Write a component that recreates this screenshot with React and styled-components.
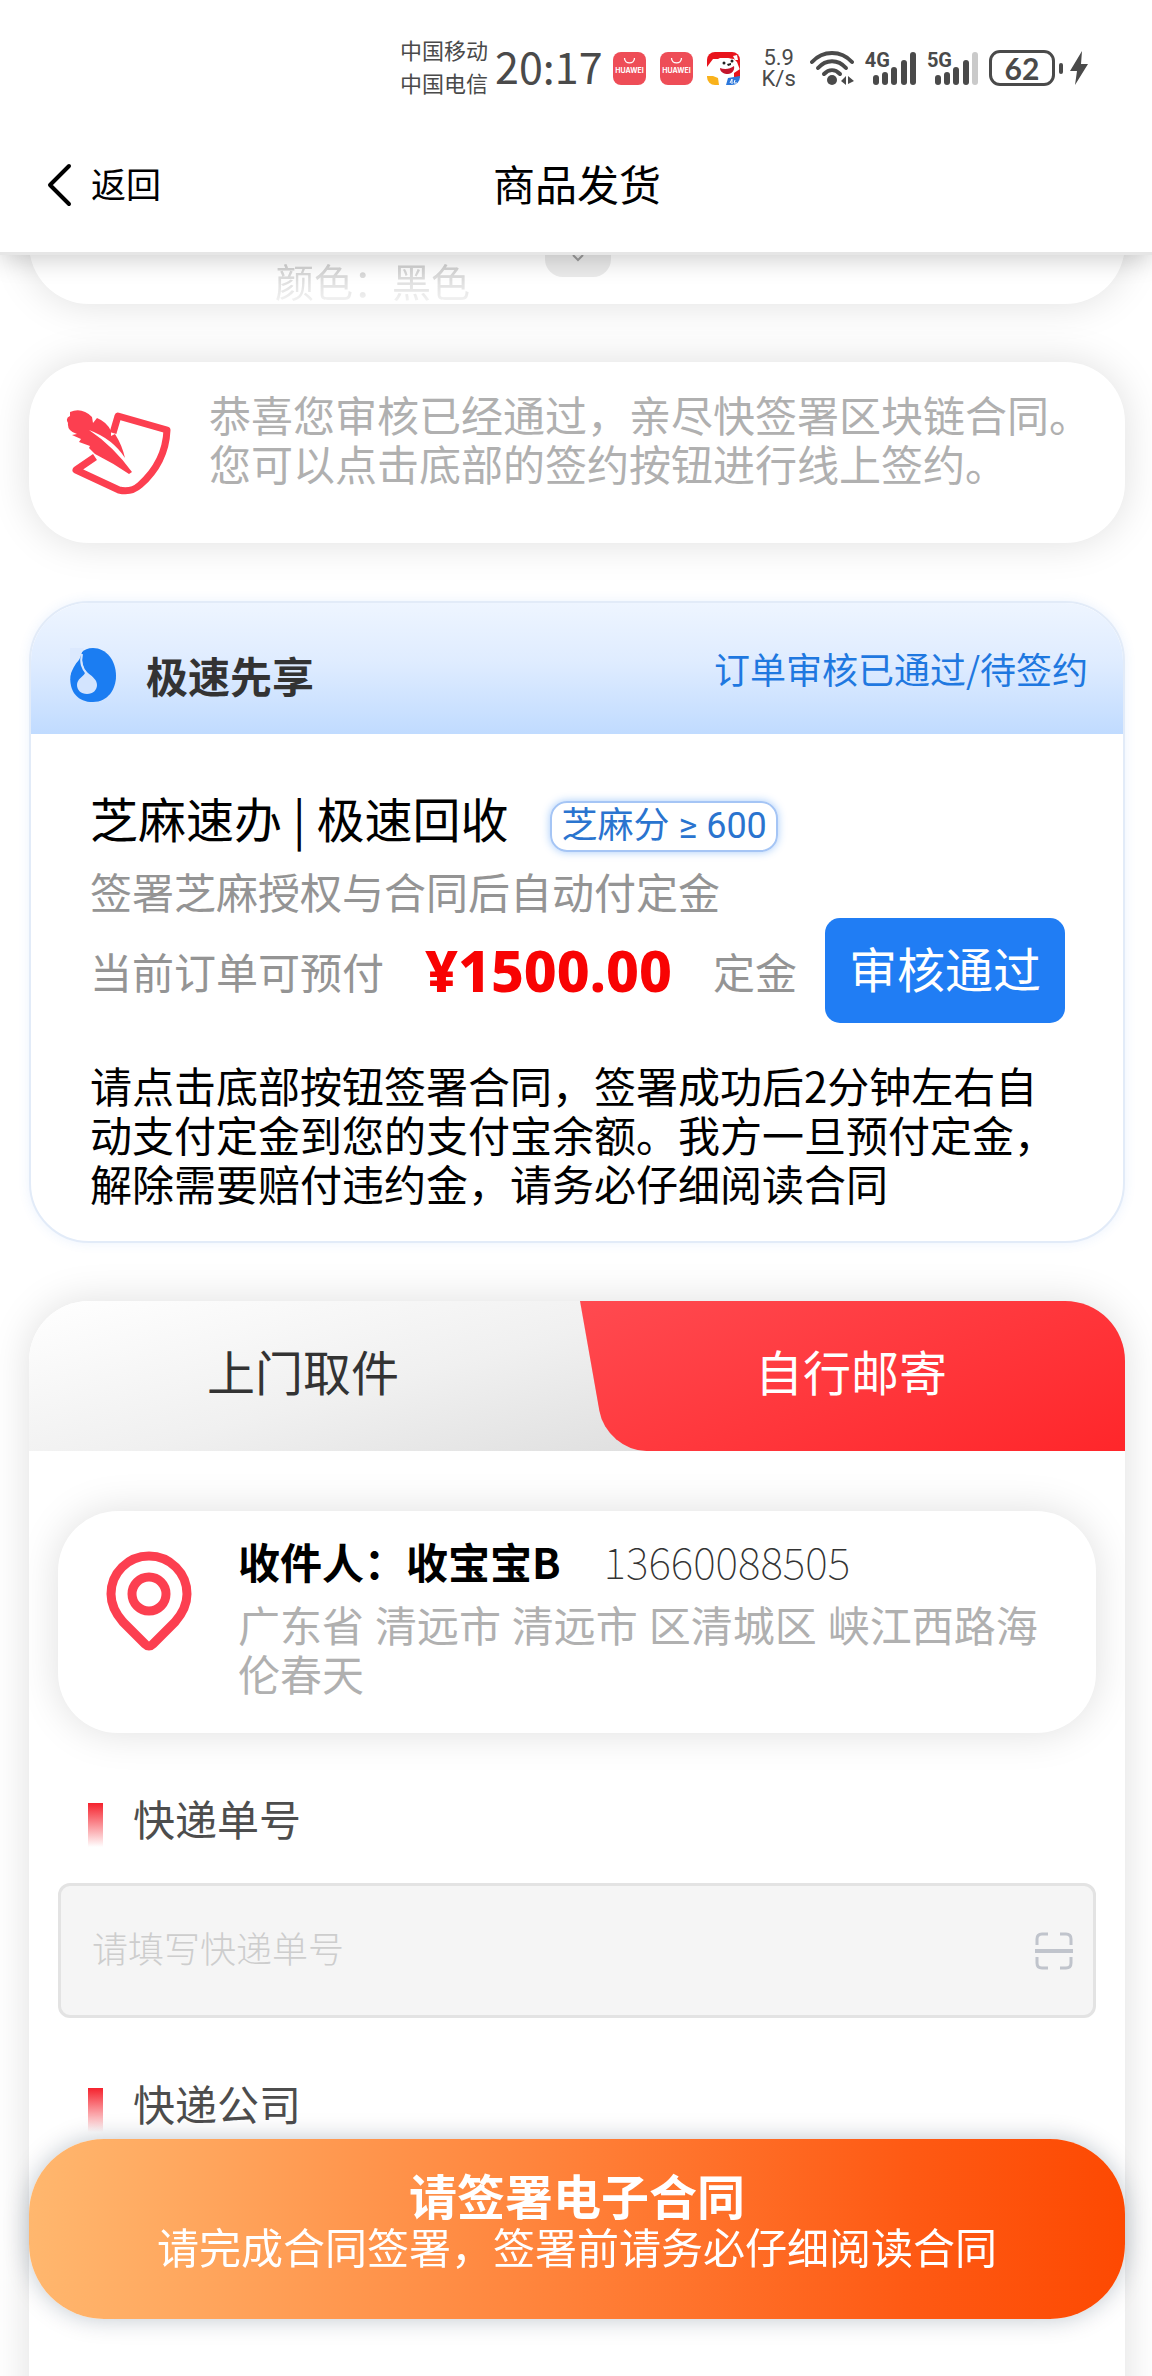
import React from "react";
import styled, { createGlobalStyle, css } from "styled-components";

const Global = createGlobalStyle`
  *, *::before, *::after { box-sizing: border-box; }
  body {
    margin: 0;
    background: #fff;
    font-family: "Noto Sans CJK SC", "Noto Sans", sans-serif;
    font-size: 42px;
    line-height: 49px;
    color: #000;
  }
  h1, h2, h3, p { margin: 0; font-size: inherit; font-weight: inherit; }
  button, input { font-family: inherit; border: 0; padding: 0; background: none; }
  button { cursor: pointer; }
  svg { display: block; flex: none; }
`;

const Screen = styled.div`
  display: flex;
  flex-direction: column;
  height: 100vh;
  overflow: hidden;
`;

const TopBar = styled.header`
  position: relative;
  z-index: 2;
  flex: none;
  background: #fff;
  border-bottom: 3px solid #e6e6e6;
  box-shadow: 0 4px 24px rgba(0, 0, 0, 0.2);
`;

/* ---------- status bar ---------- */

const StatusBar = styled.div`
  display: flex;
  align-items: center;
  justify-content: flex-end;
  height: 116px;
  padding: 20px 64px 0 0;
  color: #4a4a4a;
`;

const Carriers = styled.div`
  padding-bottom: 5px;
  font-size: 22px;
  line-height: 33px;
`;

const Clock = styled.time`
  margin: 0 10px 0 7px;
  padding-bottom: 5px;
  font-size: 43px;
`;

const AppIcons = styled.div`
  display: flex;
  gap: 14px;
  margin-right: 22px;
`;

const NetSpeed = styled.div`
  margin-right: 14px;
  font-family: Roboto, sans-serif;
  font-size: 22px;
  line-height: 21px;
  text-align: center;
`;

const Signal = styled.div`
  display: flex;
  align-items: flex-start;
  margin-left: 11px;
`;

const SignalLabel = styled.span`
  height: 33px;
  margin-right: -17px;
  font-family: Roboto, sans-serif;
  font-size: 20px;
  font-weight: 700;
  line-height: 18px;
`;

const Battery = styled.div`
  display: flex;
  align-items: center;
  gap: 4px;
  margin: 0 7px 0 11px;

  &::after {
    content: "";
    width: 4px;
    height: 11px;
    border-radius: 2px;
    background: #4a4a4a;
  }
`;

const BatteryLevel = styled.span`
  width: 66px;
  height: 36px;
  border: 3px solid #4a4a4a;
  border-radius: 11px;
  font-family: Lato, sans-serif;
  font-size: 30px;
  font-weight: 700;
  line-height: 30px;
  text-align: center;
`;

/* ---------- navigation ---------- */

const NavBar = styled.nav`
  display: grid;
  grid-template-columns: 1fr auto 1fr;
  align-items: center;
  height: 136px;
  padding: 0 42px 4px 44px;
`;

const BackButton = styled.button`
  display: flex;
  align-items: center;
  justify-self: start;
  gap: 17px;
  font-size: 35px;
  color: #000;

  svg { margin-top: 6px; }
`;

const PageTitle = styled.h1`
  font-size: 42px;
`;

/* ---------- page body ---------- */

const Content = styled.main`
  display: flex;
  flex: 1;
  flex-direction: column;
  gap: 58px;
  min-height: 0;
  padding: 0 27px 0 29px;
  overflow-y: auto;
  scrollbar-width: none;
`;

const softShadow = css`
  box-shadow: 0 0 40px rgba(0, 0, 0, 0.13);
`;

const Card = styled.section`
  flex: none;
  border-radius: 60px;
  background: #fff;
  ${softShadow}
`;

const OrderCard = styled(Card)`
  position: relative;
  margin-top: -72px;
  padding: 74px 0 1px 246px;
`;

const OrderSpec = styled.p`
  font-size: 39px;
  line-height: 46px;
  color: #cfcfcf;
  mask-image: linear-gradient(#000 10%, rgba(0, 0, 0, 0.3) 95%);
`;

const Expander = styled.button`
  position: absolute;
  bottom: 27px;
  left: 50%;
  display: flex;
  align-items: flex-end;
  justify-content: center;
  width: 66px;
  height: 48px;
  margin-left: -32px;
  padding-bottom: 15px;
  border-radius: 18px;
  background: #ebebeb;
`;

const NoticeCard = styled(Card)`
  display: flex;
  align-items: flex-start;
  gap: 36px;
  min-height: 181px;
  padding: 27px 20px 27px 36px;
  color: #b0b0b0;

  svg { margin-top: 20px; }
`;

const FastCard = styled(Card)`
  border: 2px solid #e2ebf8;
  box-shadow: 0 0 12px rgba(60, 130, 240, 0.1);
  overflow: hidden;
`;

const FastHeader = styled.div`
  display: flex;
  align-items: center;
  justify-content: space-between;
  height: 131px;
  padding: 0 35px 0 39px;
  background: linear-gradient(#eef5ff, #dfecff 45%, #c0dbff);
`;

const FastBrand = styled.div`
  display: flex;
  align-items: center;
  gap: 30px;
  padding-top: 12px;
`;

const FastName = styled.h2`
  font-weight: 700;
  color: #333;
`;

const FastStatus = styled.span`
  font-size: 36px;
  color: #1f78e0;
`;

const FastBody = styled.div`
  padding: 55px 58px 34px 59px;
`;

const ProductRow = styled.div`
  display: flex;
  align-items: baseline;
  gap: 42px;
  margin-bottom: 14px;
`;

const ProductName = styled.h3`
  font-size: 48px;
  line-height: 56px;
`;

const ScoreBadge = styled.span`
  padding: 2px 9px;
  border: 2px solid #a5c5f5;
  border-radius: 17px;
  box-shadow: 0 0 8px rgba(31, 125, 245, 0.4);
  font-family: Roboto, "Noto Sans CJK SC", sans-serif;
  font-size: 36px;
  line-height: 43px;
  color: #2a74cf;
`;

const Muted = styled.p`
  white-space: nowrap;
  color: #949494;
`;

const DepositRow = styled.div`
  display: flex;
  align-items: center;
  justify-content: space-between;
  margin: 3px 0 37px;
`;

const DepositTexts = styled.div`
  display: flex;
  align-items: center;
  gap: 41px;
`;

const Amount = styled.strong`
  font-family: "Noto Sans", sans-serif;
  font-size: 57px;
  font-weight: 800;
  color: #f80303;
`;

const ApproveButton = styled.button`
  flex: none;
  width: 240px;
  height: 105px;
  padding-bottom: 8px;
  border-radius: 15px;
  background: #207df4;
  font-size: 48px;
  color: #fff;
`;

/* ---------- shipping ---------- */

const ShippingCard = styled(Card)`
  overflow: hidden;
`;

const Tabs = styled.div`
  display: grid;
  grid-template-columns: 1fr 1fr;
  background: linear-gradient(165deg, #fff, #f0f0f0 40%, #e0e0e0 70%);
`;

const Tab = styled.button`
  position: relative;
  z-index: 0;
  height: 150px;
  padding-bottom: 13px;
  font-size: 48px;
  color: #333;

  ${(p) =>
    p.$active &&
    css`
      color: #fff;

      &::before {
        content: "";
        position: absolute;
        z-index: -1;
        inset: 0 -30px 0 3px;
        border-bottom-left-radius: 40px;
        background: linear-gradient(160deg, #ff4a50, #ff2428);
        transform: skewX(10deg);
        transform-origin: top left;
      }
    `}
`;

const ShippingBody = styled.div`
  padding: 60px 29px 320px 29px;
`;

const AddressCard = styled(Card)`
  display: flex;
  align-items: flex-start;
  gap: 45px;
  min-height: 222px;
  padding: 25px 26px 34px 47px;

  > svg { margin-top: 14px; }
`;

const Recipient = styled.div`
  display: flex;
  gap: 43px;
  margin-bottom: 16px;
`;

const RecipientName = styled.strong`
  font-weight: 700;
`;

const Phone = styled.span`
  font-size: 43px;
  font-weight: 100;
  color: #333;
`;

const Address = styled.p`
  font-family: "Noto Sans", "Noto Sans CJK SC", sans-serif;
  color: #b0b0b0;
`;

const FieldLabel = styled.label`
  display: flex;
  height: 54px;
  margin: 60px 0 36px 30px;
  gap: 30px;
  color: #4d4d4d;

  &::before {
    content: "";
    align-self: flex-end;
    width: 15px;
    height: 44px;
    background: linear-gradient(#f5222d, #fff);
  }
`;

const FieldBox = styled.div`
  display: flex;
  align-items: center;
  height: 135px;
  padding: 0 20px 0 31px;
  border: 3px solid #e3e3e3;
  border-radius: 12px;
  background: #f5f5f5;
`;

const FieldInput = styled.input`
  flex: 1;
  min-width: 0;
  height: 100%;
  padding-bottom: 8px;
  outline: 0;
  font-size: 36px;
  font-weight: 300;

  &::placeholder {
    color: #cdcdcd;
    opacity: 1;
  }
`;

/* ---------- floating action ---------- */

const SignButton = styled.button`
  position: fixed;
  z-index: 3;
  right: 27px;
  bottom: 57px;
  left: 29px;
  display: flex;
  flex-direction: column;
  align-items: center;
  height: 180px;
  padding-top: 28px;
  border-radius: 75px;
  background: linear-gradient(90deg, #ffb76e, #ff8038 50%, #fe5a14 80%, #fd4902);
  box-shadow: 0 0 24px rgba(0, 30, 60, 0.25);
  font-size: 42px;
  line-height: 49px;
  color: #fff;
`;

const SignTitle = styled.strong`
  font-size: 48px;
  line-height: 54px;
`;

/* ---------- drawings ---------- */

const StoreIcon = () => (
  <svg width="33" height="33" viewBox="0 0 33 33">
    <rect width="33" height="33" rx="8" fill="#ee4d57" />
    <path d="M11.500 6c0 6.500 10 6.500 10 0" fill="none" stroke="#fff" strokeWidth="1.300" />
    <text x="16.500" y="21" textAnchor="middle" fontFamily="Inter, sans-serif" fontSize="7" fontWeight="700" fill="#fff">
      HUAWEI
    </text>
  </svg>
);

const MascotIcon = () => (
  <svg width="33" height="33" viewBox="0 0 33 33">
    <defs>
      <clipPath id="mascot"><rect width="33" height="33" rx="8" /></clipPath>
    </defs>
    <g clipPath="url(#mascot)">
      <rect width="33" height="33" fill="#fff" />
      <path d="M0 0h33v18l-3-8-3-3-8-1-7 1-6 0-6 8z" fill="#e8141c" />
      <path d="M26 4l4-1 1 5-3 0z" fill="#fff" />
      <path d="M1 17c1-6 5-9 8-9l4-2 8 0 7 3 2 7-4 9-12 1-6-2-5 1z" fill="#fff" />
      <circle cx="17" cy="11" r="1.500" fill="#222" />
      <circle cx="25" cy="9" r="1.500" fill="#222" />
      <path d="M20 12l4-1 0 2-3 1z" fill="#222" />
      <path d="M13 16c5 2 10 1 14-2 1 4-2 8-6 8-4 0-8-2-8-6z" fill="#c3162c" />
      <path d="M27 21l6-4v9l-6-1z" fill="#e8141c" />
      <path d="M0 24l6 0 5 2 1 7H0z" fill="#f9b21c" />
      <path d="M19 33l2-7 12-2v9z" fill="#2c78dc" />
      <path d="M23 31l2-4v5M28 28l-1 3 3 0" fill="none" stroke="#fff" strokeWidth="1" />
    </g>
  </svg>
);

const WifiIcon = () => (
  <svg width="44" height="34" viewBox="0 0 44 34">
    <g fill="none" stroke="#4a4a4a" strokeWidth="4" strokeLinecap="round">
      <path d="M2 11C13-1 31-1 42 11" />
      <path d="M8 17C16 8 28 8 36 17" />
      <path d="M14 23c5-5 11-5 16 0" />
    </g>
    <circle cx="22" cy="29" r="5" fill="#4a4a4a" />
    <path d="M31 30l5-5v9zM38 25v8l6-3z" fill="#4a4a4a" />
  </svg>
);

const SignalBars = ({ level }) => (
  <svg width="43" height="34" viewBox="0 0 43 34">
    {[10, 13, 18, 25, 33].map((h, i) => (
      <rect key={h} x={i * 9 + (i > 2 ? 1 : 0)} y={34 - h} width="6" height={h} rx="3" fill={i < level ? "#4a4a4a" : "#cacaca"} />
    ))}
  </svg>
);

const BoltIcon = () => (
  <svg width="18" height="34" viewBox="0 0 18 34">
    <path d="M12 0L0 20h7L5 34 18 13h-7z" fill="#4a4a4a" />
  </svg>
);

const BackIcon = () => (
  <svg width="30" height="44" viewBox="0 0 30 44">
    <path d="M25 3L6 22l19 19" fill="none" stroke="#000" strokeWidth="4" strokeLinecap="round" strokeLinejoin="round" />
  </svg>
);

const ChevronIcon = () => (
  <svg width="12" height="8" viewBox="0 0 12 8">
    <path d="M1 1l5 5 5-5" fill="none" stroke="#9c9c9c" strokeWidth="2" />
  </svg>
);

const QuillIcon = () => (
  <svg width="108" height="90" viewBox="0 0 108 90">
    <path
      d="M48 24L53 7 102 21C101 44 92 61 75 76q-9 8-21 5L11 61 30 48"
      fill="none"
      stroke="#fc3f50"
      strokeWidth="7"
      strokeLinejoin="round"
    />
    <path
      d="M3 14Q0 9 5 7L5 3Q17 -2 27 8l1 6 4-5q10 4 14 13l0 5 4-2Q57 36 60 49 48 30 24 21 48 37 67 63l-3 2Q48 54 30 45l-6-6 1-2L14 33l2-3-9-4 5-1Q2 22 3 14z"
      fill="#fc3f50"
    />
  </svg>
);

const DropIcon = () => (
  <svg width="46" height="54" viewBox="0 0 46 54">
    <path d="M12 4C-6 22-4 54 23 54c15 0 23-13 23-26C46 12 36 0 23 0c-5 0-9 2-11 4z" fill="#1b7df2" />
    <path d="M0 0h14C11 5 11 9 9 12 5 16 2 22 0 28z" fill="#dce9fe" />
    <path d="M10 11c-5 6-8 13-9 20l8 6 5-12C10 20 9 16 10 11z" fill="#1b7df2" />
    <path d="M11 9c-1 9 2 12 7 16 5 4 9 7 9 12 0 5-4 9-10 9S7 42 7 37c0-6 6-8 8-12" fill="#d3e4fe" />
    <path d="M12 6c-2 9 0 14 5 20" fill="none" stroke="#d6e6fe" strokeWidth="2" />
  </svg>
);

const PinIcon = () => (
  <svg width="88" height="102" viewBox="0 0 88 102">
    <g fill="none" stroke="#fc3f50" strokeWidth="9" strokeLinejoin="round">
      <path d="M44 6C23 6 6 23 6 44c0 12 5 20 12 28l22 22q4 4 8 0l22-22c7-8 12-16 12-28C82 23 65 6 44 6z" />
      <circle cx="44" cy="44" r="17" />
    </g>
  </svg>
);

const ScanIcon = () => (
  <svg width="38" height="38" viewBox="0 0 38 38">
    <path d="M2 13V7q0-5 5-5h6M25 2h6q5 0 5 5v6M36 25v6q0 5-5 5h-6M13 36H7q-5 0-5-5v-6" fill="none" stroke="#c0c4cc" strokeWidth="3" />
    <path d="M0 19h38" stroke="#c0c4cc" strokeWidth="4" />
  </svg>
);

export default function App() {
  return (
    <Screen>
      <Global />
      <TopBar>
        <StatusBar>
          <Carriers>
            <div>中国移动</div>
            <div>中国电信</div>
          </Carriers>
          <Clock>20:17</Clock>
          <AppIcons>
            <StoreIcon />
            <StoreIcon />
            <MascotIcon />
          </AppIcons>
          <NetSpeed>
            <div>5.9</div>
            <div>K/s</div>
          </NetSpeed>
          <WifiIcon />
          <Signal>
            <SignalLabel>4G</SignalLabel>
            <SignalBars level={5} />
          </Signal>
          <Signal>
            <SignalLabel>5G</SignalLabel>
            <SignalBars level={4} />
          </Signal>
          <Battery>
            <BatteryLevel>62</BatteryLevel>
          </Battery>
          <BoltIcon />
        </StatusBar>
        <NavBar>
          <BackButton type="button">
            <BackIcon />
            返回
          </BackButton>
          <PageTitle>商品发货</PageTitle>
        </NavBar>
      </TopBar>

      <Content>
        <OrderCard>
          <OrderSpec>颜色：黑色</OrderSpec>
          <Expander type="button" aria-label="展开">
            <ChevronIcon />
          </Expander>
        </OrderCard>

        <NoticeCard>
          <QuillIcon />
          <p>恭喜您审核已经通过，亲尽快签署区块链合同。您可以点击底部的签约按钮进行线上签约。</p>
        </NoticeCard>

        <FastCard>
          <FastHeader>
            <FastBrand>
              <DropIcon />
              <FastName>极速先享</FastName>
            </FastBrand>
            <FastStatus>订单审核已通过/待签约</FastStatus>
          </FastHeader>
          <FastBody>
            <ProductRow>
              <ProductName>芝麻速办 | 极速回收</ProductName>
              <ScoreBadge>芝麻分 ≥ 600</ScoreBadge>
            </ProductRow>
            <Muted>签署芝麻授权与合同后自动付定金</Muted>
            <DepositRow>
              <DepositTexts>
                <Muted>当前订单可预付</Muted>
                <Amount>¥1500.00</Amount>
                <Muted>定金</Muted>
              </DepositTexts>
              <ApproveButton type="button">审核通过</ApproveButton>
            </DepositRow>
            <p>请点击底部按钮签署合同，签署成功后2分钟左右自动支付定金到您的支付宝余额。我方一旦预付定金，解除需要赔付违约金，请务必仔细阅读合同</p>
          </FastBody>
        </FastCard>

        <ShippingCard>
          <Tabs role="tablist">
            <Tab type="button" role="tab" aria-selected="false">上门取件</Tab>
            <Tab type="button" role="tab" aria-selected="true" $active>自行邮寄</Tab>
          </Tabs>
          <ShippingBody>
            <AddressCard>
              <PinIcon />
              <div>
                <Recipient>
                  <RecipientName>收件人：收宝宝B</RecipientName>
                  <Phone>13660088505</Phone>
                </Recipient>
                <Address>广东省 清远市 清远市 区清城区 峡江西路海伦春天</Address>
              </div>
            </AddressCard>
            <FieldLabel htmlFor="tracking">快递单号</FieldLabel>
            <FieldBox>
              <FieldInput id="tracking" type="text" placeholder="请填写快递单号" />
              <button type="button" aria-label="扫码">
                <ScanIcon />
              </button>
            </FieldBox>
            <FieldLabel as="div">快递公司</FieldLabel>
          </ShippingBody>
        </ShippingCard>
      </Content>

      <SignButton type="button">
        <SignTitle>请签署电子合同</SignTitle>
        <span>请完成合同签署，签署前请务必仔细阅读合同</span>
      </SignButton>
    </Screen>
  );
}
